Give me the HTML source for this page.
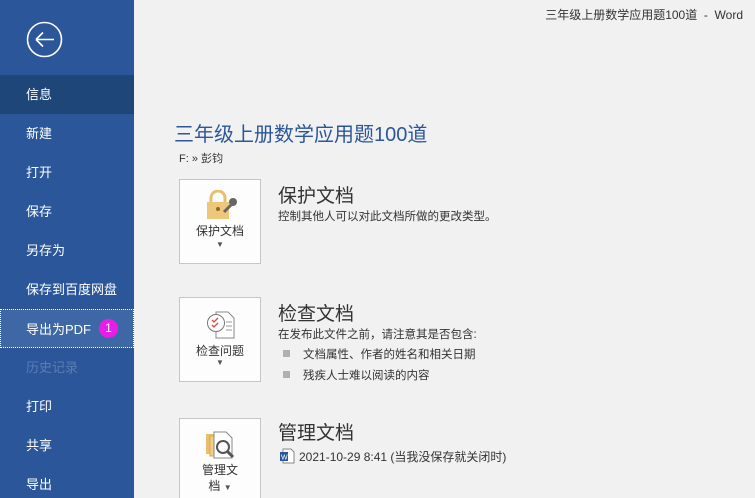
<!DOCTYPE html>
<html><head><meta charset="utf-8"><style>
*{margin:0;padding:0;box-sizing:border-box}
html{width:755px;height:498px;overflow:hidden}
body{width:755px;height:498px;overflow:hidden;background:#f1f1f1;font-family:"Liberation Sans","Noto Sans CJK SC",sans-serif;position:relative}
#side{position:absolute;left:0;top:0;width:134px;height:498px;background:#2b579a}
.it{position:absolute;left:0;width:134px;height:39px;color:#fff;font-size:13px;line-height:39px;padding-left:26px}
.sel{background:#1e4679}
.pdf{background:#3e68a5;border:1px dotted #fff;padding-left:25px}
.dis{color:#5a7db3}
.badge{display:inline-block;width:19px;height:19px;border-radius:50%;background:#e81ee8;color:#fff;font-size:12px;line-height:19px;text-align:center;margin-left:8px;vertical-align:middle;position:relative;top:-2px}
.t{position:absolute;color:#333}
.box{position:absolute;left:179px;width:82px;height:85px;border:1px solid #c6c6c6;background:#fdfdfd;text-align:center;font-size:12px;color:#333}
h2{position:absolute;font-weight:normal;font-size:19px;color:#333;left:278px}
.d{position:absolute;left:278px;font-size:11.5px;color:#333}
.b{position:absolute;left:283px;width:7px;height:7px;background:#b0b0b0}
.arr{font-size:8px;color:#555}
</style></head><body>
<div id="side">
<svg style="position:absolute;left:26px;top:21px" width="37" height="37" viewBox="0 0 37 37"><circle cx="18.5" cy="18.5" r="17" fill="none" stroke="#fff" stroke-width="1.6"/><path d="M10 18.5H28M10 18.5L17 11.5M10 18.5L17 25.5" fill="none" stroke="#fff" stroke-width="1.6"/></svg>
<div class="it sel" style="top:75px">信息</div>
<div class="it" style="top:114px">新建</div>
<div class="it" style="top:153px">打开</div>
<div class="it" style="top:192px">保存</div>
<div class="it" style="top:231px">另存为</div>
<div class="it" style="top:270px">保存到百度网盘</div>
<div class="it pdf" style="top:309px">导出为PDF<span class="badge">1</span></div>
<div class="it dis" style="top:348px">历史记录</div>
<div class="it" style="top:387px">打印</div>
<div class="it" style="top:426px">共享</div>
<div class="it" style="top:465px;height:33px">导出</div>
</div>
<div class="t" style="right:12px;top:6px;font-size:12px">三年级上册数学应用题100道 &nbsp;-&nbsp; Word</div>
<div class="t" style="left:174px;top:118px;font-size:20px;color:#2b579a">三年级上册数学应用题100道</div>
<div class="t" style="left:179px;top:150px;font-size:11px">F: » 彭钧</div>

<div class="box" style="top:179px">
<svg style="position:absolute;left:25px;top:10px" width="34" height="30" viewBox="0 0 34 30"><path d="M6 12V8a7 7 0 0 1 14 0v4" fill="none" stroke="#e8bf6c" stroke-width="3"/><rect x="2" y="12" width="22" height="17" fill="#efc77a"/><circle cx="13" cy="19" r="2" fill="#8a6a30"/><path d="M19 22l7-7" stroke="#666" stroke-width="3"/><circle cx="28" cy="12" r="4" fill="#666"/></svg>
<div style="position:absolute;top:42px;width:100%">保护文档</div><div class="arr" style="position:absolute;top:60px;width:100%">▼</div></div>
<h2 style="top:181px">保护文档</h2>
<div class="d" style="top:208px">控制其他人可以对此文档所做的更改类型。</div>

<div class="box" style="top:297px">
<svg style="position:absolute;left:26px;top:12px" width="30" height="30" viewBox="0 0 30 30"><path d="M10 2h12l6 6v20H10z" fill="#fff" stroke="#888"/><circle cx="10" cy="13" r="8.5" fill="#fff" stroke="#777"/><path d="M6 10l2 2 4-4M6 15l2 2 4-4" stroke="#d9473a" fill="none" stroke-width="1.3"/><path d="M20 12h6M20 16h6M20 20h6" stroke="#999"/></svg>
<div style="position:absolute;top:44px;width:100%">检查问题</div><div class="arr" style="position:absolute;top:60px;width:100%">▼</div></div>
<h2 style="top:299px">检查文档</h2>
<div class="d" style="top:326px">在发布此文件之前，请注意其是否包含:</div>
<div class="b" style="top:350px"></div><div class="d" style="left:303px;top:346px">文档属性、作者的姓名和相关日期</div>
<div class="b" style="top:371px"></div><div class="d" style="left:303px;top:367px">残疾人士难以阅读的内容</div>

<div class="box" style="top:418px;height:81px;border-bottom:none">
<svg style="position:absolute;left:24px;top:11px" width="32" height="32" viewBox="0 0 32 32"><rect x="2" y="4" width="14" height="20" fill="#e8bf6c"/><rect x="6" y="6" width="14" height="20" fill="#f0cf8a" stroke="#d9a84a"/><path d="M10 2h12l6 6v20H10z" fill="#fff" stroke="#888"/><circle cx="19" cy="17" r="6" fill="#fff" stroke="#555" stroke-width="2"/><path d="M23 21l6 6" stroke="#555" stroke-width="3"/></svg>
<div style="position:absolute;top:43px;width:100%;line-height:16px">管理文<br>档 <span class="arr">▼</span></div></div>
<h2 style="top:418px">管理文档</h2>
<svg style="position:absolute;left:279px;top:448px" width="16" height="16" viewBox="0 0 16 16"><path d="M4 1h8l3 3v11H4z" fill="#fff" stroke="#888"/><rect x="1" y="4" width="8" height="9" fill="#2b579a"/><text x="2" y="11.5" font-size="7" fill="#fff" font-family="Liberation Sans">W</text></svg>
<div class="d" style="left:299px;top:448px;font-size:12px">2021-10-29 8:41 (当我没保存就关闭时)</div>
</body></html>
